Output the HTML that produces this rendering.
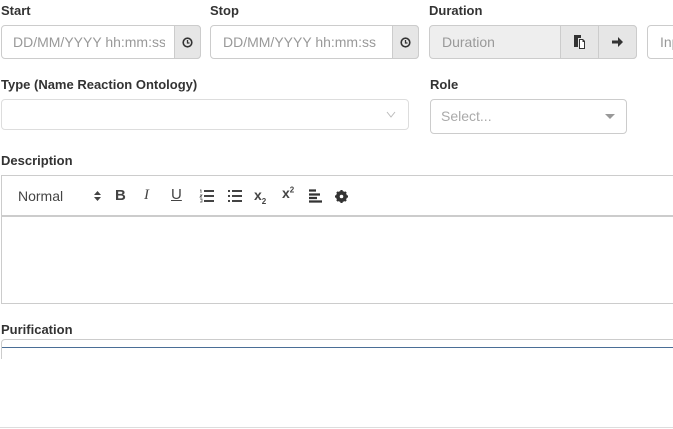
<!DOCTYPE html>
<html><head><style>
*{box-sizing:border-box}
body{margin:0;width:673px;height:429px;overflow:hidden;background:#fff;font-family:"Liberation Sans",sans-serif;color:#333;position:relative}
.l{position:absolute;font-weight:bold;font-size:13px;color:#333}
.b{position:absolute;border:1px solid #ccc;border-radius:4px;background:#fff}
.ph{position:absolute;font-size:14px;color:#999}
.ad{position:absolute;background:#e6e6e6;border:1px solid #ccc}
svg{position:absolute}
</style></head><body>
<div class="l" style="left:1px;top:3px">Start</div>
<div class="l" style="left:210px;top:3px">Stop</div>
<div class="l" style="left:429px;top:3px">Duration</div>

<div class="b" style="left:1px;top:25px;width:200px;height:34px"></div>
<div class="ph" style="left:13px;top:34px;width:152px;overflow:hidden;white-space:nowrap">DD/MM/YYYY hh:mm:ss</div>
<div class="ad" style="left:174px;top:25px;width:27px;height:34px;border-radius:0 4px 4px 0"></div>
<svg style="left:182px;top:37px" width="11" height="11" viewBox="0 0 11 11"><circle cx="5.5" cy="5.5" r="4.3" fill="none" stroke="#333" stroke-width="1.6"/><path d="M5.5 3v3h2" fill="none" stroke="#333" stroke-width="1.3"/></svg>

<div class="b" style="left:210px;top:25px;width:209px;height:34px"></div>
<div class="ph" style="left:223px;top:34px">DD/MM/YYYY hh:mm:ss</div>
<div class="ad" style="left:392px;top:25px;width:27px;height:34px;border-radius:0 4px 4px 0"></div>
<svg style="left:400px;top:37px" width="11" height="11" viewBox="0 0 11 11"><circle cx="5.5" cy="5.5" r="4.3" fill="none" stroke="#333" stroke-width="1.6"/><path d="M5.5 3v3h2" fill="none" stroke="#333" stroke-width="1.3"/></svg>

<div class="b" style="left:429px;top:25px;width:208px;height:34px;background:#eee"></div>
<div class="ph" style="left:442px;top:34px">Duration</div>
<div class="ad" style="left:560px;top:25px;width:39px;height:34px"></div>
<svg style="left:573px;top:35px" width="13" height="14" viewBox="0 0 13 14"><path d="M1 0h7v3H5v9H1z" fill="#333"/><path d="M6 4h4l2 2v8H6z" fill="#333"/><path d="M7 5h2.5v2h1.5v6H7z" fill="#fff"/></svg>
<div class="ad" style="left:598px;top:25px;width:39px;height:34px;border-radius:0 4px 4px 0"></div>
<svg style="left:611px;top:36px" width="13" height="12" viewBox="0 0 13 12"><path d="M1 4.5h6V1l5 5-5 5V7.5H1z" fill="#333"/></svg>

<div class="b" style="left:647px;top:25px;width:40px;height:34px"></div>
<div class="ph" style="left:660px;top:34px">Inp</div>

<div class="l" style="left:1px;top:77px">Type (Name Reaction Ontology)</div>
<div class="l" style="left:430px;top:77px">Role</div>
<div class="b" style="left:1px;top:99px;width:408px;height:31px;border-color:#ddd"></div>
<svg style="left:386px;top:111px" width="10" height="7" viewBox="0 0 10 7"><path d="M1 1l4 5 4-5" fill="none" stroke="#bbb" stroke-width="1"/></svg>
<div class="b" style="left:430px;top:99px;width:197px;height:35px"></div>
<div class="ph" style="left:441px;top:108px;color:#aaa">Select...</div>
<div style="position:absolute;left:605px;top:114px;width:0;height:0;border-left:5px solid transparent;border-right:5px solid transparent;border-top:5px solid #999"></div>

<div class="l" style="left:1px;top:153px">Description</div>
<div style="position:absolute;left:1px;top:175px;width:690px;height:129px;border:1px solid #ccc"></div>
<div style="position:absolute;left:1px;top:215px;width:690px;height:2px;background:#ccc"></div>
<div style="position:absolute;left:18px;top:188px;font-size:14px;color:#444">Normal</div>
<svg style="left:94px;top:190px" width="7" height="12" viewBox="0 0 7 12"><path d="M0 5l3.5-4 3.5 4z M0 7l3.5 4 3.5-4z" fill="#444"/></svg>
<div style="position:absolute;left:115px;top:187px;font-size:15px;color:#444;font-weight:bold">B</div>
<div style="position:absolute;left:144px;top:187px;font-size:15px;color:#444;font-style:italic;font-family:'Liberation Serif',serif">I</div>
<div style="position:absolute;left:171px;top:186px;font-size:15px;color:#444;text-decoration:underline">U</div>
<svg style="left:199px;top:189px" width="15" height="14" viewBox="0 0 15 14"><path d="M5 2h10M5 7h10M5 12h10" stroke="#444" stroke-width="2"/><path d="M1 1h1v3M1 6h2l-2 2h2M1 10h2v3H1" stroke="#444" stroke-width=".7" fill="none"/></svg>
<svg style="left:227px;top:189px" width="15" height="14" viewBox="0 0 15 14"><path d="M5 2h10M5 7h10M5 12h10M1 2h2M1 7h2M1 12h2" stroke="#444" stroke-width="2"/></svg>
<div style="position:absolute;left:254px;top:187px;font-size:14px;color:#444;font-weight:bold">x<sub style="font-size:8px">2</sub></div>
<div style="position:absolute;left:282px;top:185px;font-size:14px;color:#444;font-weight:bold">x<sup style="font-size:8px">2</sup></div>
<svg style="left:309px;top:189px" width="13" height="14" viewBox="0 0 13 14"><path d="M0 1.5h7M0 5.5h11M0 9h8M0 12.5h13" stroke="#333" stroke-width="2.2"/></svg>
<svg style="left:335px;top:190px" width="13" height="13" viewBox="0 0 13 13"><circle cx="6.5" cy="6.5" r="4" fill="none" stroke="#333" stroke-width="3"/><path d="M6.5 0v13M0 6.5h13M2 2l9 9M11 2l-9 9" stroke="#333" stroke-width="2.2"/><circle cx="6.5" cy="6.5" r="1.8" fill="#fff"/></svg>

<div class="l" style="left:1px;top:322px">Purification</div>
<div style="position:absolute;left:1px;top:339px;width:690px;height:20px;border:1px solid #ccc;border-radius:4px 0 0 0"></div>
<div style="position:absolute;left:2px;top:347px;width:690px;height:82px;background:#fff;border-top:1px solid #4a6e96"></div>
<div style="position:absolute;left:0;top:427px;width:673px;height:1px;background:#ddd"></div>
</body></html>
